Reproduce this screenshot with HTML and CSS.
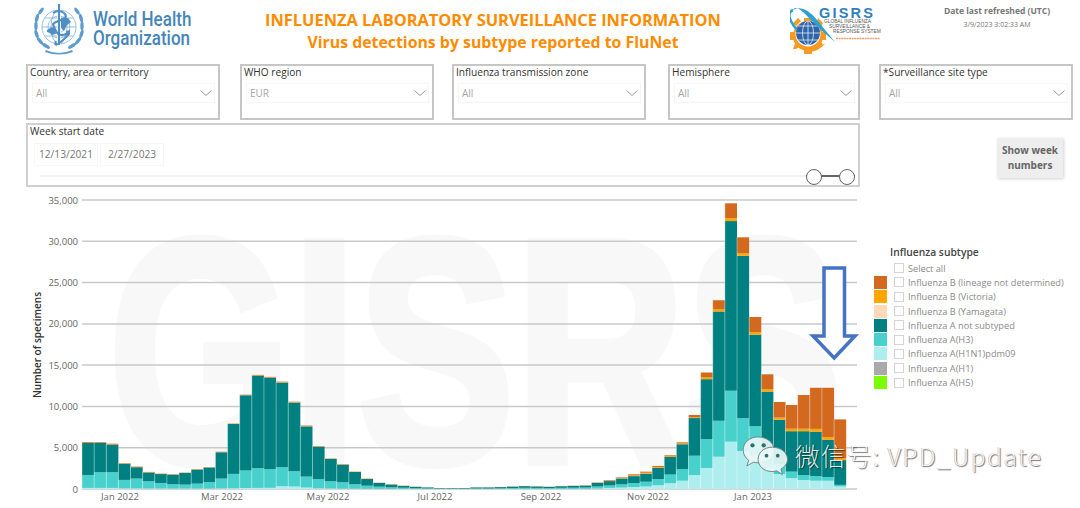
FILE: index.html
```html
<!DOCTYPE html>
<html lang="en">
<head>
<meta charset="utf-8">
<title>Influenza Laboratory Surveillance Information</title>
<link rel="stylesheet" href="styles.css">
</head>
<body>
<div class="page">
  <header class="header">
    <div class="who">
      <svg class="who-emblem" viewBox="0 0 56 52" width="56" height="52" aria-hidden="true">
        <g fill="none" stroke="#7fb0d8" stroke-width=".8">
          <circle cx="27" cy="24" r="17"/>
          <circle cx="27" cy="24" r="11"/>
          <circle cx="27" cy="24" r="5.5"/>
          <ellipse cx="27" cy="24" rx="8" ry="17"/>
          <path d="M10 24H44M13 15H41M13 33H41"/>
        </g>
        <path fill="#4f8dc2" d="M15 27l5-3 3 2 1 5-4 1-2-2-3-1zM29 15l7 0 3 4-4 3-3 6-2-2-3-6zM34 28l4-1 0 4-3 2z"/>
        <g fill="#5c9ccf">
          <ellipse cx="4" cy="23" rx="1.7" ry="4.4"/>
          <ellipse cx="4.5" cy="31" rx="1.7" ry="4.4" transform="rotate(-18 4.5 31)"/>
          <ellipse cx="8" cy="38" rx="1.7" ry="4.4" transform="rotate(-38 8 38)"/>
          <ellipse cx="14" cy="43" rx="1.7" ry="4.4" transform="rotate(-58 14 43)"/>
          <ellipse cx="5" cy="15" rx="1.7" ry="4.4" transform="rotate(15 5 15)"/>
          <ellipse cx="9" cy="8" rx="1.7" ry="4" transform="rotate(35 9 8)"/>
          <ellipse cx="50" cy="23" rx="1.7" ry="4.4"/>
          <ellipse cx="49.5" cy="31" rx="1.7" ry="4.4" transform="rotate(18 49.5 31)"/>
          <ellipse cx="46" cy="38" rx="1.7" ry="4.4" transform="rotate(38 46 38)"/>
          <ellipse cx="40" cy="43" rx="1.7" ry="4.4" transform="rotate(58 40 43)"/>
          <ellipse cx="49" cy="15" rx="1.7" ry="4.4" transform="rotate(-15 49 15)"/>
          <ellipse cx="45" cy="8" rx="1.7" ry="4" transform="rotate(-35 45 8)"/>
          <path d="M14 47q13 6 26 0l1 2q-14 5-28 0z"/>
        </g>
        <path d="M27 1V42" stroke="#fff" stroke-width="4"/>
        <path d="M27 1V42" stroke="#4f8dc2" stroke-width="2.2"/>
        <path d="M21 10q6-4 11 0t-3 7-8 4 3 7 10 3-3 6-7 1" fill="none" stroke="#4f8dc2" stroke-width="2"/>
      </svg>
      <div class="who-name">World Health<br>Organization</div>
    </div>
    <div class="title">
      <h1>INFLUENZA LABORATORY SURVEILLANCE INFORMATION</h1>
      <h2>Virus detections by subtype reported to FluNet</h2>
    </div>
    <div class="gisrs">
      <svg viewBox="790 0 100 60" width="100" height="60" role="img" aria-label="GISRS">
        <g fill="#f59a23">
          <circle cx="808" cy="36" r="15"/>
          <path d="M804 18h8v4h-8zM804 50h8v4h-8zM790 32v8h4v-8zM822 32h4v8h-4zM793 23l5-5 3 3-5 5zM815 46l5-5 3 3-5 5zM793 49l3-8 5 5-5 3zM815 26l3-8 5 5-3 5z"/>
        </g>
        <circle cx="808" cy="34" r="12.5" fill="#fff"/>
        <circle cx="808" cy="33" r="12" fill="#2f64a6"/>
        <g fill="none" stroke="#cfe0f2" stroke-width=".9">
          <ellipse cx="808" cy="33" rx="5.5" ry="12"/>
          <path d="M808 21V45M796 33H820M798 26H818M798 40H818"/>
        </g>
        <path d="M793 10Q804 4 817 20T835 42Q820 30 808 17T793 10Z" fill="#2aa0d8"/>
        <path d="M793 10Q784 14 797 30" fill="none" stroke="#2aa0d8" stroke-width="2.5"/>
        <path d="M800 48q15 2 26-5-8 9-18 9z" fill="#f59a23"/>
        <text class="gisrs-big" x="819" y="18">GISRS</text>
        <text class="gisrs-small" x="824" y="22.5">GLOBAL INFLUENZA</text>
        <text class="gisrs-small" x="829" y="27.5">SURVEILLANCE &amp;</text>
        <text class="gisrs-small" x="833" y="32.5">RESPONSE SYSTEM</text>
        <path d="M836 38.500H880" stroke="#e8a070" stroke-width="1.300" stroke-dasharray="2 .6"/>
      </svg>
    </div>
    <div class="refresh">
      <div class="refresh-label">Date last refreshed (UTC)</div>
      <div class="refresh-value">3/9/2023 3:02:33 AM</div>
    </div>
  </header>

  <section class="filters">
    <div class="filter"><div class="filter-label">Country, area or territory</div><div class="select"><span>All</span><svg class="chev" viewBox="0 0 12 6" width="12" height="6"><path d="M.5.500 6 5.500 11.500.500"/></svg></div></div>
    <div class="filter"><div class="filter-label">WHO region</div><div class="select"><span>EUR</span><svg class="chev" viewBox="0 0 12 6" width="12" height="6"><path d="M.5.500 6 5.500 11.500.500"/></svg></div></div>
    <div class="filter"><div class="filter-label">Influenza transmission zone</div><div class="select"><span>All</span><svg class="chev" viewBox="0 0 12 6" width="12" height="6"><path d="M.5.500 6 5.500 11.500.500"/></svg></div></div>
    <div class="filter filter-narrow"><div class="filter-label">Hemisphere</div><div class="select"><span>All</span><svg class="chev" viewBox="0 0 12 6" width="12" height="6"><path d="M.5.500 6 5.500 11.500.500"/></svg></div></div>
    <div class="filter"><div class="filter-label">*Surveillance site type</div><div class="select"><span>All</span><svg class="chev" viewBox="0 0 12 6" width="12" height="6"><path d="M.5.500 6 5.500 11.500.500"/></svg></div></div>
  </section>

  <section class="date-row">
    <div class="date-box">
      <div class="filter-label">Week start date</div>
      <div class="date-inputs">
        <div class="date-input">12/13/2021</div>
        <div class="date-input">2/27/2023</div>
      </div>
      <div class="slider">
        <div class="slider-range"></div>
      </div>
    </div>
    <div class="week-button">Show week<br>numbers</div>
  </section>

  <section class="main">
    <svg id="chart" class="chart" viewBox="0 192 860 316" width="860" height="316" role="img" aria-label="Virus detections by subtype"></svg>
    <aside class="legend">
      <div class="legend-title">Influenza subtype</div>
      <div class="legend-row"><i class="swatch"></i><i class="check"></i><span>Select all</span></div>
      <div class="legend-row"><i class="swatch s-bnd"></i><i class="check"></i><span>Influenza B (lineage not determined)</span></div>
      <div class="legend-row"><i class="swatch s-vic"></i><i class="check"></i><span>Influenza B (Victoria)</span></div>
      <div class="legend-row"><i class="swatch s-yam"></i><i class="check"></i><span>Influenza B (Yamagata)</span></div>
      <div class="legend-row"><i class="swatch s-ans"></i><i class="check"></i><span>Influenza A not subtyped</span></div>
      <div class="legend-row"><i class="swatch s-h3"></i><i class="check"></i><span>Influenza A(H3)</span></div>
      <div class="legend-row"><i class="swatch s-pdm"></i><i class="check"></i><span>Influenza A(H1N1)pdm09</span></div>
      <div class="legend-row"><i class="swatch s-h1"></i><i class="check"></i><span>Influenza A(H1)</span></div>
      <div class="legend-row"><i class="swatch s-h5"></i><i class="check"></i><span>Influenza A(H5)</span></div>
    </aside>
  </section>

  <div class="wechat">
    <svg viewBox="0 0 50 46" width="47" height="43" aria-hidden="true">
      <g stroke="#6f7f80" stroke-width="1" fill="#e9f7f7" fill-opacity=".92">
        <path d="M16 1C7 1 0 7 0 15c0 5 3 9 6 11l-2 6 7-4q2.500.6 5 .6C25 29 33 23 33 15S25 1 16 1Z"/>
        <path d="M31 12c-9 0-15 6-15 13s6 13 15 13q2.500 0 5-.7l6 4-1.500-6c4-2.500 7-6 7-10.300 0-7-7-13-16-13Z"/>
      </g>
      <g fill="#2f6f70">
        <circle cx="10" cy="10" r="2.300"/><circle cx="22" cy="10" r="2.300"/>
        <circle cx="25" cy="21" r="2"/><circle cx="37" cy="21" r="2"/>
      </g>
    </svg>
    <span class="wechat-text">微信号: VPD_Update</span>
  </div>
</div>
<script src="script.js"></script>
</body>
</html>
```

FILE: styles.css
```css
* { box-sizing: border-box; }
html, body { margin: 0; padding: 0; background: #fff; overflow: hidden; }
body { font-family: "Open Sans", "Liberation Sans", sans-serif; }
.page { position: relative; width: 1080px; height: 508px; overflow: hidden; }

.header { display: flex; height: 64px; }
.who { display: flex; width: 190px; padding: 3px 0 0 32px; }
.who-emblem { flex: none; }
.who-name {
  margin: 7px 0 0 5px;
  font-family: "Roboto", "Liberation Sans", sans-serif;
  font-size: 21px;
  line-height: 18.500px;
  font-weight: 500;
  color: #4585ba;
  white-space: nowrap;
  transform: scaleX(.81);
  transform-origin: left top;
}
.title { width: 600px; padding: 9px 0 0 6px; text-align: center; color: #ff8c00; }
.title h1, .title h2 { margin: 0; font-weight: 700; white-space: nowrap; }
.title h1 { font-size: 16.400px; line-height: 22px; }
.title h2 { font-size: 15.850px; line-height: 22px; }
.gisrs { width: 100px; }
.gisrs svg { display: block; }
.gisrs-big { font: 700 14.500px "Liberation Sans", sans-serif; letter-spacing: 2.200px; fill: #2f80c2; }
.gisrs-small { font: 400 4.800px "Liberation Sans", sans-serif; fill: #555; }
.refresh { width: 190px; padding: 5px 0 0 24px; text-align: center; color: #777; }
.refresh-label { font-size: 8.500px; font-weight: 700; line-height: 12px; }
.refresh-value { font-size: 7px; line-height: 16px; }

.filters {
  display: grid;
  grid-template-columns: 214px 212px 216px 211px 194px;
  padding-left: 26px;
}
.filter {
  width: 194px;
  height: 56px;
  padding: 0 3px 0 2px;
  border: 2px solid #c6c6c6;
  background: #fff;
}
.filter-narrow { width: 192px; }
.filter-label { margin-top: -1px; font-size: 10.150px; line-height: 14px; color: #333; white-space: nowrap; }
.select {
  display: flex;
  align-items: center;
  justify-content: space-between;
  height: 20px;
  margin: 4px 0 0 2px;
  padding: 0 2px 0 3px;
  border: 1px solid #f6f6f6;
  font-size: 10px;
  color: #a6a6a6;
}
.chev { fill: none; stroke: #999; stroke-width: 1; }

.date-row { display: flex; align-items: flex-start; margin-top: 3px; padding-left: 26px; }
.date-box {
  width: 834px;
  height: 64px;
  padding: 0 2px;
  border: 2px solid #d0d0d0;
}
.date-inputs { display: flex; gap: 2px; margin: 5px 0 0 4px; }
.date-input {
  width: 64px;
  height: 23px;
  border: 1px solid #f6f6f6;
  font-size: 10.200px;
  line-height: 21px;
  text-align: center;
  color: #777;
}
.slider { position: relative; height: 2px; margin: 9px 1px 0 10px; background: linear-gradient(#f1f1f1, #f1f1f1) left / 96% 100% no-repeat; }
.slider-range {
  position: absolute;
  right: 0;
  top: -6px;
  width: 49px;
  height: 14px;
  background: linear-gradient(#666, #666) center / 100% 2px no-repeat;
}
.slider-range::before, .slider-range::after {
  content: "";
  position: absolute;
  top: 0;
  width: 14px;
  height: 14px;
  border: 1.500px solid #666;
  border-radius: 50%;
  background: #fff;
}
.slider-range::before { left: 0; }
.slider-range::after { right: 0; }
.week-button {
  width: 66px;
  height: 40px;
  margin: 15px 0 0 137px;
  padding-top: 5px;
  background: #eee;
  box-shadow: 1px 1px 3px rgba(0, 0, 0, .18);
  font-size: 10px;
  font-weight: 700;
  line-height: 15px;
  text-align: center;
  color: #666;
}

.main { display: flex; margin-top: 5px; }
.chart { display: block; flex: none; }
.axis-text { font-size: 9.500px; fill: #666; }
.axis-title { font-size: 10px; font-weight: 600; fill: #333; }
.watermark { font: 700 320px "Liberation Sans", sans-serif; fill: #f8f8f8; stroke: #f8f8f8; stroke-width: 8; }
.grid-line { stroke: #c9c9c9; stroke-width: 1.500; }
.bar-gap { stroke: #fff; stroke-opacity: .35; stroke-width: 1; }
.arrow { fill: #fff; stroke: #4472c4; stroke-width: 3.500; stroke-linejoin: miter; }

.legend { margin-left: 14px; padding-top: 53px; }
.legend-title { margin: 0 0 2px 16px; font-size: 10.300px; font-weight: 600; line-height: 14px; color: #444; }
.legend-row { display: flex; align-items: center; height: 14.300px; font-size: 9.200px; color: #8a8a8a; white-space: nowrap; }
.swatch { flex: none; width: 13px; height: 13px; margin-right: 7px; }
.check { flex: none; width: 10px; height: 10px; margin-right: 4px; border: 1px solid #d4d4d4; }
.s-bnd { background: #d2691e; }
.s-vic { background: #ffa500; }
.s-yam { background: #ffdab9; }
.s-ans { background: #008080; }
.s-h3 { background: #48d1cc; }
.s-pdm { background: #afeeee; }
.s-h1 { background: #a9a9a9; }
.s-h5 { background: #7cfc00; }

.wechat { position: absolute; left: 743px; top: 436px; display: flex; align-items: center; gap: 5px; }
.wechat-text {
  margin-top: -5px;
  font-family: "Noto Sans CJK SC", "Noto Sans", sans-serif;
  font-size: 24.500px;
  font-weight: 300;
  letter-spacing: 1.500px;
  white-space: nowrap;
  color: rgba(255, 255, 255, .9);
  text-shadow: 1px 1px 1px rgba(0, 0, 0, .55), -.5px -.5px .5px rgba(0, 0, 0, .3);
}
```

FILE: script.js
```javascript
// Stacked values per week, as cumulative tops: [H1N1pdm09, H3, A not subtyped, B Victoria, B total]
var weeks = [
  [130,1700,5570,5600,5690],[130,2030,5590,5620,5690],[130,2030,5370,5400,5490],[80,1100,3050,3080,3130],
  [80,1260,2640,2670,2720],[60,935,2000,2030,2070],[60,730,1810,1840,1870],[50,570,1740,1760,1790],
  [50,530,1950,1970,1990],[50,650,2350,2370,2400],[50,850,2600,2620,2640],[70,1260,4450,4480,4510],
  [90,1830,7870,7900,7930],[120,2240,11350,11380,11420],[130,2520,13720,13760,13820],[140,2400,13480,13520,13580],
  [330,2640,12880,12930,13000],[300,2150,10460,10510,10570],[170,1500,7580,7620,7680],[90,1180,5120,5160,5200],
  [60,935,3640,3670,3700],[40,810,2940,2970,3010],[30,570,2060,2085,2110],[20,400,1210,1235,1260],
  [15,280,730,750,770],[10,200,540,555,570],[8,150,380,390,400],[5,110,265,272,280],
  [5,80,190,195,200],[3,50,110,115,120],[3,50,110,115,120],[3,50,115,118,120],
  [3,70,190,195,200],[3,70,190,195,200],[5,90,230,235,240],[8,120,285,292,300],
  [8,140,345,352,360],[8,130,305,312,320],[8,110,265,272,280],[12,140,340,350,360],
  [15,150,380,390,400],[25,170,415,430,440],[60,300,740,770,800],[130,420,960,1020,1090],
  [170,560,1280,1340,1410],[240,720,1560,1660,1780],[300,880,1850,1970,2100],[450,1200,2560,2670,2790],
  [700,1750,3880,3970,4080],[1000,2400,5420,5520,5650],[1690,4030,8590,8680,8960],[2540,6040,13300,13550,14110],
  [3910,8260,21500,21800,22860],[5730,11900,32450,32800,34600],[4600,8580,28250,28550,30480],[4000,7600,18700,19000,20830],
  [2500,4000,11800,12100,13890],[1800,3000,8400,8650,10540],[1300,2100,7000,7300,10170],[1090,1690,7000,7300,11380],
  [1000,1570,6950,7280,12260],[1000,1450,5980,6300,12260],[300,500,3500,3700,8430]
];
var colors = ["#afeeee", "#48d1cc", "#008080", "#ffa500", "#d2691e"];
var x0 = 82, step = 12.13, baseY = 489, scale = 289 / 35000;
var parts = [];

parts.push('<text class="watermark" x="108" y="462" textLength="735" lengthAdjust="spacingAndGlyphs">GISRS</text>');

for (var v = 0; v <= 35000; v += 5000) {
  var y = baseY - v * scale;
  parts.push('<line class="grid-line" x1="82" x2="857" y1="' + y.toFixed(1) + '" y2="' + y.toFixed(1) + '"/>');
  parts.push('<text class="axis-text" x="78" y="' + (y + 3.5).toFixed(1) + '" text-anchor="end">' + v.toLocaleString("en-US") + '</text>');
}

weeks.forEach(function (w, i) {
  var x = x0 + i * step, prev = 0;
  w.forEach(function (top, k) {
    var yTop = baseY - top * scale, h = (top - prev) * scale;
    parts.push('<rect x="' + x.toFixed(2) + '" y="' + yTop.toFixed(2) + '" width="' + step.toFixed(2) + '" height="' + h.toFixed(2) + '" fill="' + colors[k] + '"/>');
    prev = top;
  });
  var topY = baseY - w[4] * scale;
  parts.push('<line class="bar-gap" x1="' + x.toFixed(2) + '" x2="' + x.toFixed(2) + '" y1="' + topY.toFixed(2) + '" y2="' + baseY + '"/>');
});

[["Jan 2022", 120], ["Mar 2022", 222], ["May 2022", 328], ["Jul 2022", 435], ["Sep 2022", 541], ["Nov 2022", 648], ["Jan 2023", 753]].forEach(function (m) {
  parts.push('<text class="axis-text" x="' + m[1] + '" y="500" text-anchor="middle">' + m[0] + '</text>');
});

parts.push('<text class="axis-title" transform="translate(41 345) rotate(-90)" text-anchor="middle">Number of specimens</text>');
parts.push('<path class="arrow" d="M824 268H844.500V336H855L834.200 358 813 336H824Z"/>');

document.getElementById("chart").innerHTML = parts.join("");
```
